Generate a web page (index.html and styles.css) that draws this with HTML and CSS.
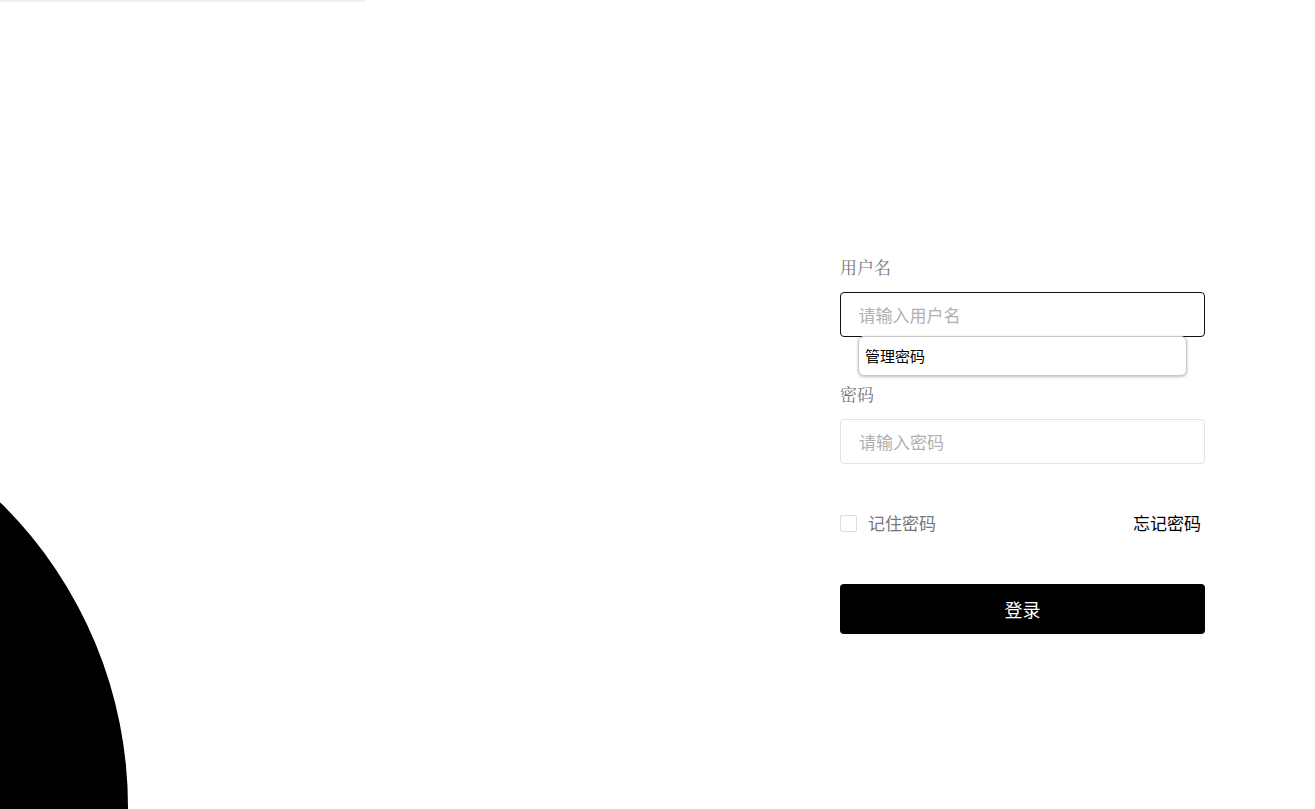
FILE: index.html
```html
<!DOCTYPE html>
<html lang="zh-CN">
<head>
<meta charset="utf-8">
<title>登录</title>
<link rel="stylesheet" href="styles.css">
</head>
<body>
<div class="bg">
  <div class="topline"></div>
  <div class="blob"></div>
</div>
<div class="page">
  <form class="form">
    <div class="label">用户名</div>
    <div class="field">
      <input class="input input-focus" type="text" placeholder="请输入用户名">
      <div class="autofill">管理密码</div>
    </div>
    <div class="label label-pw">密码</div>
    <div class="field">
      <input class="input" type="password" placeholder="请输入密码">
    </div>
    <div class="row">
      <label class="remember"><span class="box"></span><span>记住密码</span></label>
      <a class="forgot">忘记密码</a>
    </div>
    <button class="btn" type="button">登录</button>
  </form>
</div>
</body>
</html>
```
FILE: styles.css
```css
html, body {
  margin: 0;
  padding: 0;
  overflow: hidden;
}
body {
  width: 1315px;
  height: 809px;
  position: relative;
  background: #fff;
  font-family: "Noto Sans CJK SC", "Noto Sans", sans-serif;
}
.bg {
  position: absolute;
  left: 0;
  top: 0;
  width: 1315px;
  height: 809px;
  overflow: hidden;
}
.topline {
  position: absolute;
  left: 0;
  top: 0;
  width: 365px;
  height: 2px;
  background: linear-gradient(to bottom, #e6e6e6, #f6f6f6);
}
.blob {
  position: absolute;
  left: -726px;
  top: 380px;
  width: 854px;
  height: 854px;
  border-radius: 50%;
  background: #000;
}
.page {
  position: relative;
  display: flex;
  justify-content: flex-end;
  padding: 256px 110px 0 0;
}
.form {
  width: 365px;
  margin: 0;
}
.label {
  font-size: 17px;
  line-height: 22px;
  height: 22px;
  color: #777;
  font-family: "Noto Serif CJK SC", "Noto Sans CJK SC", serif;
  margin-bottom: 14px;
}
.label-pw {
  margin-top: 46px;
}
.field {
  position: relative;
}
.input {
  display: block;
  box-sizing: border-box;
  width: 365px;
  height: 45px;
  border: 1px solid #e3e3e3;
  border-radius: 4px;
  padding: 0 0 0 18px;
  font-size: 17px;
  font-family: "Noto Sans CJK SC", sans-serif;
  color: #333;
  outline: none;
  background: #fff;
}
.input::placeholder {
  color: #b0b0b0;
}
.input-focus {
  border: 1.5px solid #111;
  padding-left: 17.5px;
}
.autofill {
  position: absolute;
  left: 18px;
  top: 44px;
  box-sizing: border-box;
  width: 329px;
  height: 40px;
  border: 1px solid #c8c8c8;
  border-radius: 6px;
  box-shadow: 0 1px 3px rgba(0,0,0,0.25);
  background: #fff;
  padding-left: 6px;
  font-size: 15px;
  line-height: 38px;
  color: #000;
}
.row {
  margin-top: 43px;
  height: 30px;
  display: flex;
  align-items: center;
  justify-content: space-between;
}
.remember {
  display: flex;
  align-items: center;
  gap: 11px;
  font-size: 17px;
  color: #777;
}
.box {
  display: block;
  box-sizing: border-box;
  width: 17px;
  height: 17px;
  border: 1px solid #ddd;
  border-radius: 2px;
  margin-top: 2px;
}
.forgot {
  font-size: 17px;
  color: #000;
  margin-right: 4px;
}
.btn {
  display: block;
  margin-top: 47px;
  width: 365px;
  height: 50px;
  border: none;
  border-radius: 4px;
  background: #000;
  color: #fff;
  font-size: 18px;
  font-family: "Noto Sans CJK SC", sans-serif;
}
```
